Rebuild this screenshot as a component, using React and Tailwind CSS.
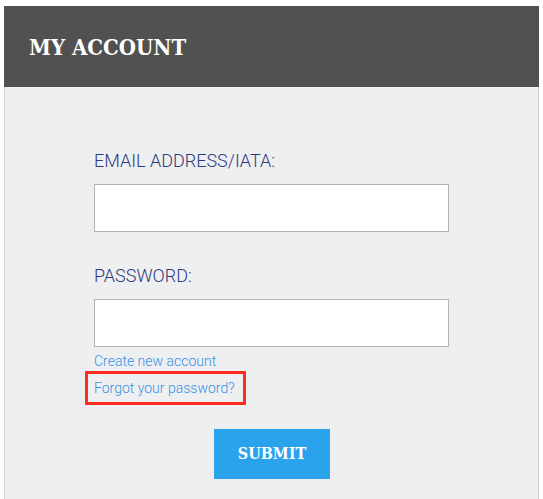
import React from "react";

const MyAccount = () => {
  return (
    <div className="w-[543px] h-[499px] bg-white pt-[6px] pl-[4px] pr-[4px] overflow-hidden">
      <div className="h-[81px] bg-[#515151] flex items-center pl-[25px]">
        <h1 className="text-white text-[22px] font-bold font-stretch-condensed font-['DejaVu_Serif_Condensed','DejaVu_Serif',serif] pt-[2px]">
          MY ACCOUNT
        </h1>
      </div>

      <div className="h-[420px] bg-[#eeeff1] border-l border-r border-[#d2d3d5] pl-[89px] pt-[62px] font-['Roboto',sans-serif]">
        {/* EMAIL */}
        <label className="block text-[#2d3a7c] text-[18px] font-light leading-[24px]">
          EMAIL ADDRESS/IATA:
        </label>
        <input
          type="text"
          className="block mt-[11px] w-[355px] h-[48px] bg-white border border-[#b3b3b3] outline-none"
        />

        {/* PASSWORD */}
        <label className="block mt-[32px] text-[#2d3a7c] text-[18px] font-light leading-[24px]">
          PASSWORD:
        </label>
        <input
          type="password"
          className="block mt-[11px] w-[355px] h-[48px] bg-white border border-[#b3b3b3] outline-none"
        />

        <div className="mt-[4px] text-[14px] leading-[20px]">
          <a href="#" className="block text-[#3a8fe3] font-light">
            Create new account
          </a>
          <div className="-ml-[9px] w-[161px] h-[34px] border-[3px] border-[#ff2b1f] flex items-center pl-[6px]">
            <a href="#" className="text-[#3a8fe3] font-light">
              Forgot your password?
            </a>
          </div>
        </div>

        <div className="mt-[24px] pl-[120px]">
          <button className="w-[116px] h-[50px] bg-[#2ba2ec] text-white text-[16px] font-bold font-stretch-condensed font-['DejaVu_Serif_Condensed','DejaVu_Serif',serif]">
            SUBMIT
          </button>
        </div>
      </div>
    </div>
  );
};

export default function App() {
  return <MyAccount />;
}
